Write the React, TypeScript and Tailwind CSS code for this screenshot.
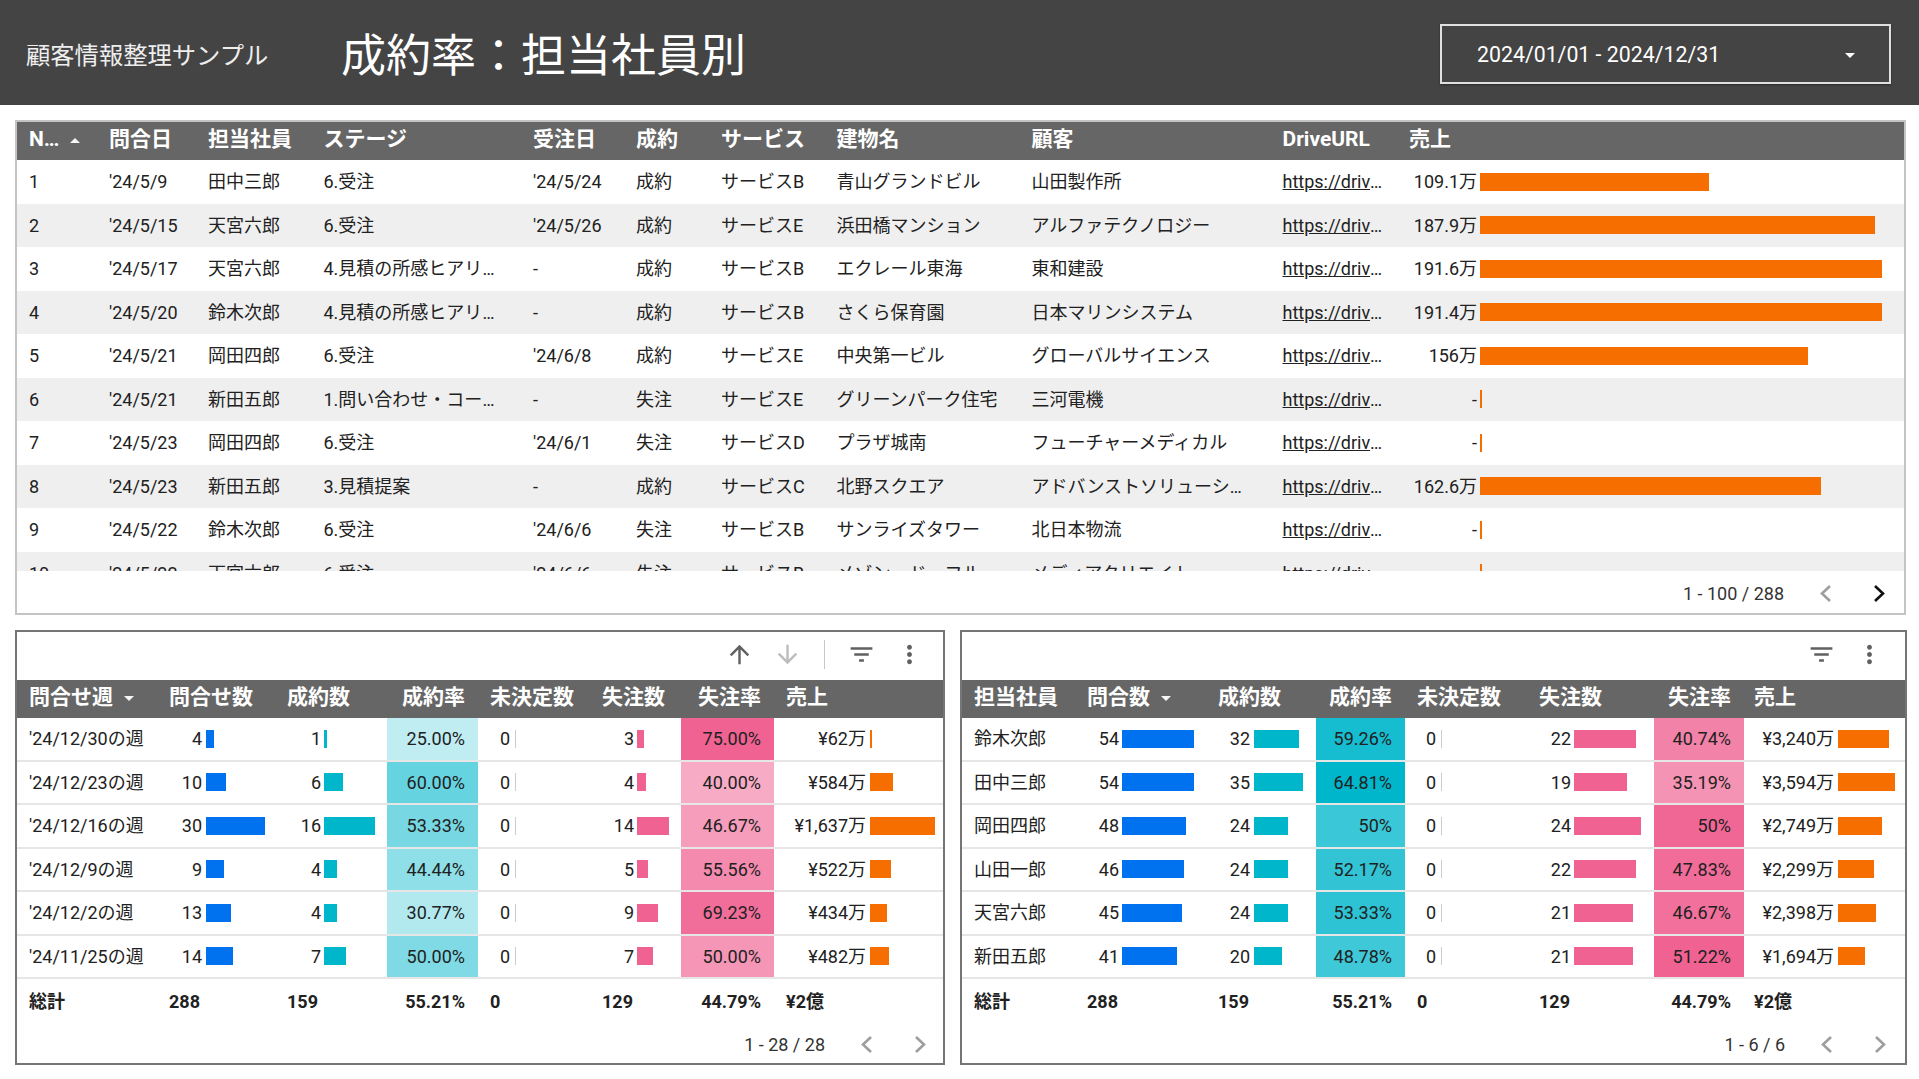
const FONT = "font-[Roboto,'Noto_Sans_CJK_JP',sans-serif]";

const BLUE = "#0072f0";
const CYAN = "#00b6cb";
const PINK = "#f06292";
const ORANGE = "#f66d00";

interface LeadRow {
  no: number;
  date: string;
  staff: string;
  stage: string;
  orderDate: string;
  result: string;
  service: string;
  building: string;
  customer: string;
  sales: number | null;
  label: string;
}

const leadRows: LeadRow[] = [
  { no: 1, date: "'24/5/9", staff: "田中三郎", stage: "6.受注", orderDate: "'24/5/24", result: "成約", service: "サービスB", building: "青山グランドビル", customer: "山田製作所", sales: 109.1, label: "109.1万" },
  { no: 2, date: "'24/5/15", staff: "天宮六郎", stage: "6.受注", orderDate: "'24/5/26", result: "成約", service: "サービスE", building: "浜田橋マンション", customer: "アルファテクノロジー", sales: 187.9, label: "187.9万" },
  { no: 3, date: "'24/5/17", staff: "天宮六郎", stage: "4.見積の所感ヒアリング", orderDate: "-", result: "成約", service: "サービスB", building: "エクレール東海", customer: "東和建設", sales: 191.6, label: "191.6万" },
  { no: 4, date: "'24/5/20", staff: "鈴木次郎", stage: "4.見積の所感ヒアリング", orderDate: "-", result: "成約", service: "サービスB", building: "さくら保育園", customer: "日本マリンシステム", sales: 191.4, label: "191.4万" },
  { no: 5, date: "'24/5/21", staff: "岡田四郎", stage: "6.受注", orderDate: "'24/6/8", result: "成約", service: "サービスE", building: "中央第一ビル", customer: "グローバルサイエンス", sales: 156, label: "156万" },
  { no: 6, date: "'24/5/21", staff: "新田五郎", stage: "1.問い合わせ・コール受付", orderDate: "-", result: "失注", service: "サービスE", building: "グリーンパーク住宅", customer: "三河電機", sales: null, label: "-" },
  { no: 7, date: "'24/5/23", staff: "岡田四郎", stage: "6.受注", orderDate: "'24/6/1", result: "失注", service: "サービスD", building: "プラザ城南", customer: "フューチャーメディカル", sales: null, label: "-" },
  { no: 8, date: "'24/5/23", staff: "新田五郎", stage: "3.見積提案", orderDate: "-", result: "成約", service: "サービスC", building: "北野スクエア", customer: "アドバンストソリューションズ", sales: 162.6, label: "162.6万" },
  { no: 9, date: "'24/5/22", staff: "鈴木次郎", stage: "6.受注", orderDate: "'24/6/6", result: "失注", service: "サービスB", building: "サンライズタワー", customer: "北日本物流", sales: null, label: "-" },
  { no: 10, date: "'24/5/22", staff: "天宮六郎", stage: "6.受注", orderDate: "'24/6/6", result: "失注", service: "サービスB", building: "メゾン・ド・フル", customer: "メディアクリエイト", sales: null, label: "-" },
];

interface SummaryRow {
  name: string;
  asked: number;
  won: number;
  wonRate: string;
  lost: number;
  lostRate: string;
  sales: number;
}

const weekRows: SummaryRow[] = [
  { name: "'24/12/30の週", asked: 4, won: 1, wonRate: "25.00%", lost: 3, lostRate: "75.00%", sales: 62 },
  { name: "'24/12/23の週", asked: 10, won: 6, wonRate: "60.00%", lost: 4, lostRate: "40.00%", sales: 584 },
  { name: "'24/12/16の週", asked: 30, won: 16, wonRate: "53.33%", lost: 14, lostRate: "46.67%", sales: 1637 },
  { name: "'24/12/9の週", asked: 9, won: 4, wonRate: "44.44%", lost: 5, lostRate: "55.56%", sales: 522 },
  { name: "'24/12/2の週", asked: 13, won: 4, wonRate: "30.77%", lost: 9, lostRate: "69.23%", sales: 434 },
  { name: "'24/11/25の週", asked: 14, won: 7, wonRate: "50.00%", lost: 7, lostRate: "50.00%", sales: 482 },
];

const staffRows: SummaryRow[] = [
  { name: "鈴木次郎", asked: 54, won: 32, wonRate: "59.26%", lost: 22, lostRate: "40.74%", sales: 3240 },
  { name: "田中三郎", asked: 54, won: 35, wonRate: "64.81%", lost: 19, lostRate: "35.19%", sales: 3594 },
  { name: "岡田四郎", asked: 48, won: 24, wonRate: "50%", lost: 24, lostRate: "50%", sales: 2749 },
  { name: "山田一郎", asked: 46, won: 24, wonRate: "52.17%", lost: 22, lostRate: "47.83%", sales: 2299 },
  { name: "天宮六郎", asked: 45, won: 24, wonRate: "53.33%", lost: 21, lostRate: "46.67%", sales: 2398 },
  { name: "新田五郎", asked: 41, won: 20, wonRate: "48.78%", lost: 21, lostRate: "51.22%", sales: 1694 },
];

const LEAD_COLS = "grid-cols-[80px_99px_115.5px_209.5px_103px_85px_115.5px_195px_251px_126.5px_1fr]";
const WEEK_COLS = "grid-cols-[140px_118px_112px_91px_112px_91px_93px_1fr]";
const STAFF_COLS = "grid-cols-[113px_131px_110px_89px_122px_127px_90px_1fr]";

function Tri({ up }: { up?: boolean }) {
  return (
    <svg width="10" height="5" viewBox="0 0 10 5" className="flex-none">
      <polygon points={up ? "0,5 10,5 5,0" : "0,0 10,0 5,5"} fill="#f5f5f5" />
    </svg>
  );
}

function Chevron({ next, dark }: { next?: boolean; dark?: boolean }) {
  return (
    <svg width="12" height="19" viewBox="0 0 12 19" className="flex-none">
      <polyline
        points={next ? "2,2 10,9.5 2,17" : "10,2 2,9.5 10,17"}
        fill="none"
        stroke={dark ? "#111111" : "#9e9e9e"}
        strokeWidth="2.6"
      />
    </svg>
  );
}

function Pager({ text, dark, className }: { text: string; dark?: boolean; className: string }) {
  return (
    <div className={`flex flex-1 items-center justify-end pt-[2px] text-[18px] text-[#333333] ${className}`}>
      <span>{text}</span>
      <div className="ml-[36px] flex items-center gap-[41px]">
        <Chevron />
        <Chevron next dark={dark} />
      </div>
    </div>
  );
}

function ToolIcon({ d, className }: { d: string; className: string }) {
  return (
    <div className="flex w-[48px] items-center justify-center">
      <svg width="29" height="29" viewBox="0 0 24 24" className={className}>
        <path d={d} fill="currentColor" />
      </svg>
    </div>
  );
}

const ARROW_UP = "M4 12l1.41 1.41L11 7.83V20h2V7.83l5.58 5.59L20 12l-8-8-8 8z";
const ARROW_DOWN = "M20 12l-1.41-1.41L13 16.17V4h-2v12.17l-5.58-5.59L4 12l8 8 8-8z";
const FILTER = "M10 18h4v-2h-4v2zM3 6v2h18V6H3zm3 7h12v-2H6v2z";
const MORE = "M12 8c1.1 0 2-.9 2-2s-.9-2-2-2-2 .9-2 2 .9 2 2 2zm0 2c-1.1 0-2 .9-2 2s.9 2 2 2 2-.9 2-2-.9-2-2-2zm0 6c-1.1 0-2 .9-2 2s.9 2 2 2 2-.9 2-2-.9-2-2-2z";

function BarCell({ value, numW, gap, width, color }: { value: string; numW: string; gap: string; width: number; color: string }) {
  return (
    <div className="flex h-full items-center">
      <span className={`flex-none whitespace-nowrap text-right ${numW}`}>{value}</span>
      <div className={`h-[18px] flex-none ${gap}`} style={{ width, backgroundColor: color }} />
    </div>
  );
}

function HeatCell({ value, color }: { value: string; color: string }) {
  return (
    <div className="flex h-full items-center justify-end pr-[13px]" style={{ backgroundColor: color }}>
      {value}
    </div>
  );
}

function Head({ children, right, tight }: { children: React.ReactNode; right?: boolean; tight?: boolean }) {
  return (
    <div className={`flex items-center gap-[11px] whitespace-nowrap pb-[2px] ${right ? "justify-end pr-[13px]" : tight ? "pl-[10px]" : "pl-3"}`}>
      {children}
    </div>
  );
}

const SUMMARY_HEADS = ["問合せ数", "成約数", "成約率", "未決定数", "失注数", "失注率", "売上"];
const STAFF_HEADS = ["問合数", "成約数", "成約率", "未決定数", "失注数", "失注率", "売上"];

export default function App() {
  return (
    <div className={`flex h-[1079px] w-[1919px] flex-col overflow-hidden bg-white text-[18px] text-[#212121] ${FONT}`}>
      {/* title bar */}
      <header className="flex h-[105px] flex-none items-center bg-[#444444] pl-[26px] pr-[28px] pt-[3px] text-white">
        <div className="mt-[4px] w-[315px] text-[24.3px] text-[#eeeeee]">顧客情報整理サンプル</div>
        <h1 className="mt-[4px] text-[45px] font-normal leading-none">成約率：担当社員別</h1>
        <div className="ml-auto flex h-[60px] w-[451px] items-center justify-between border-2 border-[#e0e0e0] pl-[35px] pr-[34px] pt-[2px] text-[21.3px] shadow-[0_1px_2px_rgba(0,0,0,0.4)]">
          <span>2024/01/01 - 2024/12/31</span>
          <svg width="10" height="5" viewBox="0 0 10 5">
            <polygon points="0,0 10,0 5,5" fill="#ffffff" />
          </svg>
        </div>
      </header>

      {/* lead list */}
      <section className="ml-[15px] mt-[15px] flex h-[495px] w-[1891px] flex-none flex-col border-2 border-[#c4c4c4]">
        <div className={`grid h-[38px] flex-none bg-[#666666] text-[21px] font-bold text-white ${LEAD_COLS}`}>
          <Head>
            <span>N…</span>
            <Tri up />
          </Head>
          {["問合日", "担当社員", "ステージ", "受注日", "成約", "サービス", "建物名", "顧客", "DriveURL", "売上"].map((h) => (
            <Head key={h}>{h}</Head>
          ))}
        </div>
        <div className="h-[411px] flex-none overflow-hidden">
          {leadRows.map((r, i) => (
            <div key={r.no} className={`grid h-[43.5px] items-center ${LEAD_COLS} ${i % 2 === 1 ? "bg-[#efefef]" : "bg-white"}`}>
              <div className="pl-3">{r.no}</div>
              <div className="pl-3">{r.date}</div>
              <div className="pl-3">{r.staff}</div>
              <div className="truncate pl-3 pr-[14px]">{r.stage}</div>
              <div className="pl-3">{r.orderDate}</div>
              <div className="pl-3">{r.result}</div>
              <div className="pl-3">{r.service}</div>
              <div className="truncate pl-3">{r.building}</div>
              <div className="truncate px-3">{r.customer}</div>
              <div className="truncate px-3 underline">https://drive.google.com/</div>
              <BarCell
                value={r.label}
                numW="w-[80px]"
                gap="ml-[2.5px]"
                width={r.sales === null ? 2 : r.sales * 2.103}
                color={ORANGE}
              />
            </div>
          ))}
        </div>
        <Pager text="1 - 100 / 288" dark className="pr-[19px]" />
      </section>

      {/* summary tables */}
      <div className="ml-[15px] mt-[15px] flex gap-[15px]">
        <section className="flex h-[435px] w-[930px] flex-col border-2 border-[#757575]">
          <div className="flex h-[48px] flex-none items-center justify-end pb-[3px] pr-[10px]">
            <ToolIcon d={ARROW_UP} className="text-[#616161]" />
            <ToolIcon d={ARROW_DOWN} className="text-[#bdbdbd]" />
            <div className="ml-[13px] mr-[12px] h-[29px] w-[1px] bg-[#c8c8c8]" />
            <ToolIcon d={FILTER} className="text-[#616161]" />
            <ToolIcon d={MORE} className="text-[#616161]" />
          </div>
          <div className={`grid h-[38px] flex-none bg-[#666666] text-[21px] font-bold text-white ${WEEK_COLS}`}>
            <Head>
              <span>問合せ週</span>
              <Tri />
            </Head>
            {SUMMARY_HEADS.map((h) => (
              <Head key={h} right={h === "成約率" || h === "失注率"}>{h}</Head>
            ))}
          </div>
          {weekRows.map((r) => {
            const wonA = parseFloat(r.wonRate) / 100;
            const lostA = parseFloat(r.lostRate) / 75;
            return (
              <div key={r.name} className={`grid h-[43.5px] flex-none items-center border-b-2 border-[#e6e6e6] ${WEEK_COLS}`}>
                <div className="whitespace-nowrap pl-3">{r.name}</div>
                <BarCell value={String(r.asked)} numW="w-[45px]" gap="ml-[4px]" width={r.asked * 1.96} color={BLUE} />
                <BarCell value={String(r.won)} numW="w-[46px]" gap="ml-[3px]" width={r.won * 3.2} color={CYAN} />
                <HeatCell value={r.wonRate} color={`rgba(0,182,203,${wonA})`} />
                <BarCell value="0" numW="w-[32px]" gap="ml-[5px]" width={1} color="#cccccc" />
                <BarCell value={String(r.lost)} numW="w-[44px]" gap="ml-[3px]" width={r.lost * 2.28} color={PINK} />
                <HeatCell value={r.lostRate} color={`rgba(240,98,146,${lostA})`} />
                <BarCell value={`¥${r.sales.toLocaleString("en-US")}万`} numW="w-[92px]" gap="ml-[4px]" width={r.sales * 0.0397} color={ORANGE} />
              </div>
            );
          })}
          <div className={`grid h-[44px] flex-none items-center font-bold ${WEEK_COLS}`}>
            <div className="pl-3">総計</div>
            <div className="pl-3">288</div>
            <div className="pl-3">159</div>
            <div className="pr-[13px] text-right">55.21%</div>
            <div className="pl-3">0</div>
            <div className="pl-3">129</div>
            <div className="pr-[13px] text-right">44.79%</div>
            <div className="pl-3">¥2億</div>
          </div>
          <Pager text="1 - 28 / 28" className="pr-[17px]" />
        </section>

        <section className="flex h-[435px] w-[947px] flex-col border-2 border-[#757575]">
          <div className="flex h-[48px] flex-none items-center justify-end pb-[3px] pr-[12px]">
            <ToolIcon d={FILTER} className="text-[#616161]" />
            <ToolIcon d={MORE} className="text-[#616161]" />
          </div>
          <div className={`grid h-[38px] flex-none bg-[#666666] text-[21px] font-bold text-white ${STAFF_COLS}`}>
            <Head>担当社員</Head>
            {STAFF_HEADS.map((h) =>
              h === "問合数" ? (
                <Head key={h}>
                  <span>{h}</span>
                  <Tri />
                </Head>
              ) : (
                <Head key={h} right={h === "成約率" || h === "失注率"} tight={h === "売上"}>{h}</Head>
              ),
            )}
          </div>
          {staffRows.map((r) => {
            const wonA = parseFloat(r.wonRate) / 64.81;
            const lostA = parseFloat(r.lostRate) / 51.22;
            return (
              <div key={r.name} className={`grid h-[43.5px] flex-none items-center border-b-2 border-[#e6e6e6] ${STAFF_COLS}`}>
                <div className="pl-3">{r.name}</div>
                <BarCell value={String(r.asked)} numW="w-[44px]" gap="ml-[3px]" width={r.asked * 1.34} color={BLUE} />
                <BarCell value={String(r.won)} numW="w-[44px]" gap="ml-[4px]" width={r.won * 1.4} color={CYAN} />
                <HeatCell value={r.wonRate} color={`rgba(0,182,203,${wonA})`} />
                <BarCell value="0" numW="w-[31px]" gap="ml-[5px]" width={1} color="#cccccc" />
                <BarCell value={String(r.lost)} numW="w-[44px]" gap="ml-[3px]" width={r.lost * 2.8} color={PINK} />
                <HeatCell value={r.lostRate} color={`rgba(240,98,146,${lostA})`} />
                <BarCell value={`¥${r.sales.toLocaleString("en-US")}万`} numW="w-[90px]" gap="ml-[4px]" width={r.sales * 0.01586} color={ORANGE} />
              </div>
            );
          })}
          <div className={`grid h-[44px] flex-none items-center font-bold ${STAFF_COLS}`}>
            <div className="pl-3">総計</div>
            <div className="pl-3">288</div>
            <div className="pl-3">159</div>
            <div className="pr-[13px] text-right">55.21%</div>
            <div className="pl-3">0</div>
            <div className="pl-3">129</div>
            <div className="pr-[13px] text-right">44.79%</div>
            <div className="pl-[10px]">¥2億</div>
          </div>
          <Pager text="1 - 6 / 6" className="pr-[19px]" />
        </section>
      </div>
    </div>
  );
}
